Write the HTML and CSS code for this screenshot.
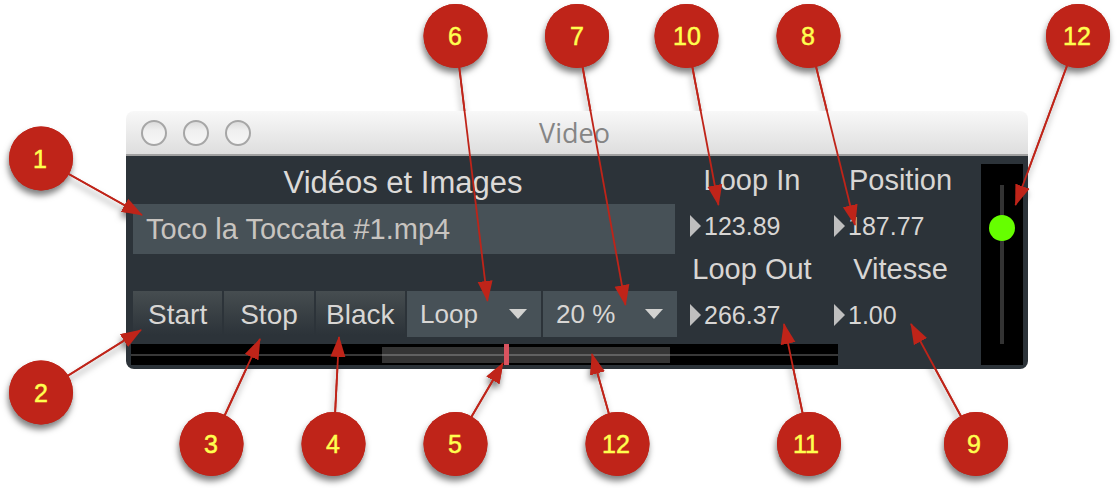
FILE: index.html
```html
<!DOCTYPE html>
<html lang="fr">
  <head>
    <meta charset="UTF-8" />
    <meta name="viewport" content="width=device-width, initial-scale=1.0" />
    <title>Video</title>
    <link rel="stylesheet" href="styles.css">
  </head>
  <body>
    <main class="figure">
      <!-- shadows of the callouts, below the window -->
      <svg class="callouts callouts-shadow" viewBox="0 0 1119 488" aria-hidden="true">
        <defs>
          <marker id="head" markerUnits="userSpaceOnUse" markerWidth="22" markerHeight="16" refX="20" refY="8" orient="auto">
            <path d="M0 0.5 L21 8 L0 15.5 Z" fill="#bf2419" />
          </marker>
          <g id="shapes">
            <g stroke="#bf2419" stroke-width="1.8">
              <path d="M41 158.5 L142 215" marker-end="url(#head)" />
              <path d="M41 392.5 L141 330" marker-end="url(#head)" />
              <path d="M211.5 444 L260 339" marker-end="url(#head)" />
              <path d="M333.5 444 L339 337" marker-end="url(#head)" />
              <path d="M455.5 444 L503 363" marker-end="url(#head)" />
              <path d="M617.5 444 L592 354" marker-end="url(#head)" />
              <path d="M809 444 L784 324" marker-end="url(#head)" />
              <path d="M976 444 L911 324" marker-end="url(#head)" />
              <path d="M455.5 36 L487.5 301" marker-end="url(#head)" />
              <path d="M577 36 L625.5 305" marker-end="url(#head)" />
              <path d="M686.5 36 L718.5 205" marker-end="url(#head)" />
              <path d="M808.5 36 L855 225" marker-end="url(#head)" />
              <path d="M1078 36 L1015.5 205" marker-end="url(#head)" />
            </g>
            <g fill="#bf2419">
              <circle cx="41" cy="158.5" r="32" />
              <circle cx="41" cy="392.5" r="32" />
              <circle cx="211.5" cy="444" r="32" />
              <circle cx="333.5" cy="444" r="32" />
              <circle cx="455.5" cy="444" r="32" />
              <circle cx="617.5" cy="444" r="32" />
              <circle cx="809" cy="444" r="32" />
              <circle cx="976" cy="444" r="32" />
              <circle cx="455.5" cy="36" r="32" />
              <circle cx="577" cy="36" r="32" />
              <circle cx="686.5" cy="36" r="32" />
              <circle cx="808.5" cy="36" r="32" />
              <circle cx="1078" cy="36" r="32" />
            </g>
          </g>
        </defs>
        <use href="#shapes" />
      </svg>

      <section class="window">
        <header class="titlebar">
          <div class="lights">
            <span class="light"></span>
            <span class="light"></span>
            <span class="light"></span>
          </div>
          <h1 class="title">Video</h1>
        </header>

        <div class="panel">
          <div class="source">
            <label class="source-label" for="file">Vidéos et Images</label>
            <input class="file" id="file" type="text" value="Toco la Toccata #1.mp4">
            <div class="controls">
              <button class="button" type="button">Start</button>
              <button class="button" type="button">Stop</button>
              <button class="button" type="button">Black</button>
              <div class="drop">
                <select class="select" aria-label="Mode">
                  <option>Loop</option>
                </select>
              </div>
              <div class="drop">
                <select class="select" aria-label="Zoom">
                  <option>20 %</option>
                </select>
              </div>
            </div>
          </div>

          <div class="readings loop">
            <div class="reading">
              <label class="reading-label" for="loop-in">Loop In</label>
              <div class="value"><input class="number" id="loop-in" type="text" value="123.89"></div>
            </div>
            <div class="reading">
              <label class="reading-label" for="loop-out">Loop Out</label>
              <div class="value"><input class="number" id="loop-out" type="text" value="266.37"></div>
            </div>
          </div>

          <div class="readings playback">
            <div class="reading">
              <label class="reading-label" for="position">Position</label>
              <div class="value"><input class="number" id="position" type="text" value="187.77"></div>
            </div>
            <div class="reading">
              <label class="reading-label" for="vitesse">Vitesse</label>
              <div class="value"><input class="number" id="vitesse" type="text" value="1.00"></div>
            </div>
          </div>

          <input class="fader" type="range" min="0" max="100" value="71" aria-label="Volume">
          <input class="timeline" type="range" min="0" max="1000" value="531" aria-label="Timeline">
        </div>
      </section>

      <svg class="callouts callouts-front" viewBox="0 0 1119 488">
        <use href="#shapes" />
        <g class="callout-numbers">
          <text x="40" y="168">1</text>
          <text x="41" y="402">2</text>
          <text x="211" y="453">3</text>
          <text x="333" y="453">4</text>
          <text x="455" y="453">5</text>
          <text x="616" y="453">12</text>
          <text x="806" y="453">11</text>
          <text x="974" y="453">9</text>
          <text x="455" y="45">6</text>
          <text x="577" y="45">7</text>
          <text x="687" y="45">10</text>
          <text x="808" y="45">8</text>
          <text x="1077" y="45">12</text>
        </g>
      </svg>
    </main>
  </body>
</html>
```
FILE: styles.css
```css
* {
  box-sizing: border-box;
}

body {
  margin: 0;
  background-color: white;
  font-family: "Liberation Sans", Arial, sans-serif;
}

input,
select,
button {
  margin: 0;
  border: 0;
  border-radius: 0;
  appearance: none;
  font-family: inherit;
  color: #d8d6d4;
}

.figure {
  position: relative;
  padding: 111px 91px 119px 126px;
}

/* callouts */
.callouts {
  position: absolute;
  top: 0;
  left: 0;
  width: 100%;
  height: 100%;
  pointer-events: none;
}

.callouts-shadow {
  filter: drop-shadow(-1px 5px 3px rgba(0, 0, 0, 0.5));
}

.callouts-front {
  z-index: 2;
}

.callout-numbers {
  font-size: 25px;
  fill: #ffff4f;
  stroke: #ffff4f;
  stroke-width: 0.5;
  text-anchor: middle;
}

/* window */
.window {
  position: relative;
  z-index: 1;
}

.titlebar {
  display: grid;
  grid-template-columns: 1fr auto 1fr;
  align-items: center;
  height: 45px;
  padding-left: 15px;
  border-bottom: 2px solid #a0a0a0;
  border-radius: 8px 8px 0 0;
  background-image: linear-gradient(#f8f8f8, #dedede);
}

.lights {
  display: flex;
  gap: 16px;
}

.light {
  width: 26px;
  height: 26px;
  border: 2px solid #a6a6a6;
  border-radius: 50%;
  background-image: linear-gradient(#dcdcdc, #f0f0f0 40%, #f6f6f6);
}

.title {
  margin: 0;
  padding-right: 20px;
  font-family: "Open Sans", sans-serif;
  font-size: 27px;
  font-weight: 500;
  line-height: 36px;
  color: #858585;
}

.panel {
  display: grid;
  grid-template-columns: 1fr 144px 147px 42px;
  grid-template-rows: 180px 21px;
  padding: 8px 5px 4px 5px;
  border-radius: 0 0 8px 8px;
  background-color: #2c3339;
}

/* file and transport buttons */
.source {
  display: flex;
  flex-direction: column;
  padding: 0 13px 7px 2px;
}

.source-label {
  height: 40px;
  padding-right: 4px;
  font-size: 31px;
  line-height: 38px;
  text-align: center;
  color: #dcdad8;
}

.file {
  width: calc(100% - 2px);
  height: 50px;
  padding: 0 13px;
  background-color: #475157;
  font-size: 29px;
  color: #c8c4c0;
}

.controls {
  display: grid;
  grid-template-columns: 2fr 2fr 2fr 3fr 3fr;
  gap: 2px;
  margin-top: auto;
}

.button {
  height: 46px;
  padding: 2px 0 0;
  background-image: linear-gradient(#464d50, #2c3339 95%);
  font-size: 28px;
}

.drop {
  position: relative;
}

.drop::after {
  content: "";
  position: absolute;
  top: 18px;
  right: 14px;
  width: 18px;
  height: 10px;
  background-color: #d2d2d0;
  clip-path: polygon(0 0, 100% 0, 50% 100%);
  pointer-events: none;
}

.select {
  width: 100%;
  height: 46px;
  padding: 0 36px 0 13px;
  background-color: #475157;
  font-size: 26px;
}

/* loop points, position, speed */
.readings {
  display: flex;
  flex-direction: column;
  gap: 14px;
  padding-top: 2px;
}

.loop {
  padding-right: 20px;
}

.playback {
  padding-right: 14px;
}

.reading {
  display: flex;
  flex-direction: column;
  gap: 17px;
}

.reading-label {
  font-size: 29px;
  line-height: 28px;
  text-align: center;
  color: #d8d6d4;
}

.value {
  display: flex;
  align-items: center;
  gap: 3px;
}

.value::before {
  content: "";
  width: 11px;
  height: 22px;
  background-color: #bfbfbf;
  clip-path: polygon(0 0, 100% 50%, 0 100%);
}

.number {
  flex: 1;
  min-width: 0;
  height: 30px;
  padding: 0;
  background-color: transparent;
  font-size: 25px;
}

/* sliders */
.fader {
  grid-column: 4;
  grid-row: 1 / 3;
  width: 42px;
  height: 100%;
  writing-mode: vertical-lr;
  direction: rtl;
  background: linear-gradient(#333, #333) center / 4px calc(100% - 42px) no-repeat black;
}

.fader::-webkit-slider-thumb {
  appearance: none;
  width: 26px;
  height: 26px;
  border-radius: 50%;
  background-color: #6f0;
}

.timeline {
  grid-column: 1 / 4;
  grid-row: 2;
  width: calc(100% - 143px);
  height: 21px;
  background:
    linear-gradient(rgba(255, 255, 255, 0.22), rgba(255, 255, 255, 0.22)) center / 100% 2px no-repeat,
    linear-gradient(#353535, #353535) 60% center / 288px 16px no-repeat,
    black;
}

.timeline::-webkit-slider-thumb {
  appearance: none;
  width: 5px;
  height: 21px;
  background-color: #d9535f;
}
```
